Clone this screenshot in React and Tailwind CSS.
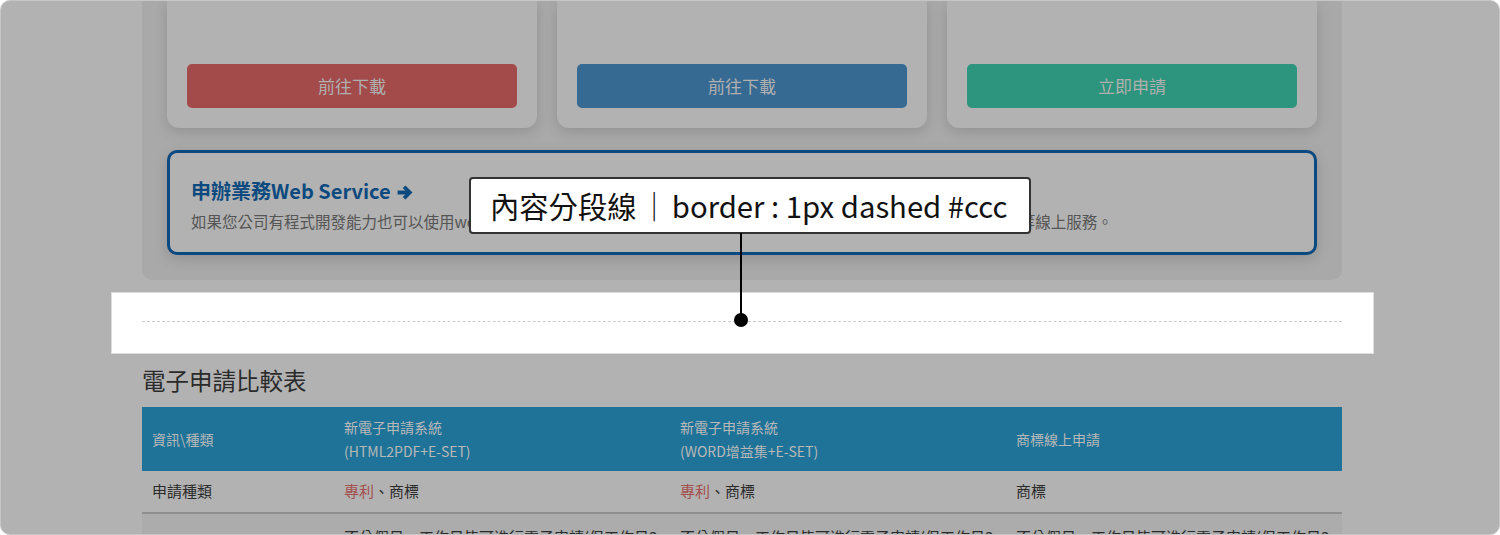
import React from "react";

const font = { fontFamily: '"Noto Sans CJK TC", "Noto Sans", sans-serif' };

function Card({ color, label }) {
  return (
    <div className="flex h-[127px] w-[370px] flex-col justify-end rounded-b-[12px] bg-[#b2b2b2] px-[20px] pb-[20px] shadow-[0_4px_14px_rgba(0,0,0,0.14)]">
      <div
        className={`flex h-[44px] items-center justify-center rounded-[5px] text-[17px] text-[#b0b0b0] ${color}`}
      >
        {label}
      </div>
    </div>
  );
}

function ArrowRight() {
  return (
    <svg viewBox="0 0 16 16" className="ml-[5px] mt-[2px] h-[17px] w-[17px]">
      <path d="M1.5 8H12.5" stroke="#0d4a7f" strokeWidth="3.6" fill="none" />
      <path
        d="M7.6 2.6L13 8L7.6 13.4"
        stroke="#0d4a7f"
        strokeWidth="3.6"
        fill="none"
        strokeLinejoin="miter"
        strokeLinecap="butt"
      />
    </svg>
  );
}

export default function App() {
  return (
    <div className="h-[535px] w-[1500px] bg-white" style={font}>
      <div className="relative h-[535px] w-[1500px] overflow-hidden rounded-[10px] border border-[#c6c6c6] bg-[#b2b2b2]">
        <div className="ml-[141px] w-[1200px]">
          {/* grey panel */}
          <div className="rounded-b-[10px] bg-[#a9a9a9] px-[25px] pb-[25px]">
            <div className="flex gap-[20px]">
              <Card color="bg-[#a34b4b]" label="前往下載" />
              <Card color="bg-[#366a92]" label="前往下載" />
              <Card color="bg-[#2d947d]" label="立即申請" />
            </div>
            <div className="mt-[22px] h-[105px] rounded-[10px] border-[3px] border-[#0b4a80] bg-[#b2b2b2] pl-[21px] pt-[24px] shadow-[0_4px_14px_rgba(0,0,0,0.14)]">
              <div className="flex items-center text-[20px] font-bold leading-[28px] text-[#0d4a7f]">
                申辦業務Web Service
                <ArrowRight />
              </div>
              <div className="mt-[4px] text-[15.5px] leading-[24px] text-[#555555]">
                如果您公司有程式開發能力也可以使用web service，將貴公司的系統與本局電子申請系統介接，即可直接提供專利、商標等線上服務。
              </div>
            </div>
          </div>

          {/* highlighted divider strip */}
          <div className="-ml-[31px] mt-[12px] h-[62px] w-[1263px] border border-[#dedede] bg-white pl-[30px] pt-[28px]">
            <div className="w-[1200px] border-t border-dashed border-[#cccccc]" />
          </div>

          {/* table section */}
          <div className="mt-[9px] text-[23.5px] leading-[34px] text-[#2b2b2b]">電子申請比較表</div>
          <table className="mt-[10px] w-[1200px] table-fixed border-collapse text-left">
            <colgroup>
              <col className="w-[192px]" />
              <col className="w-[336px]" />
              <col className="w-[336px]" />
              <col className="w-[336px]" />
            </colgroup>
            <thead>
              <tr className="h-[64px] bg-[#1f7398] text-[14px] font-normal leading-[24px] text-[#b8b8b8]">
                <th className="px-[10px] font-normal">資訊\種類</th>
                <th className="px-[10px] font-normal">
                  新電子申請系統
                  <br />
                  (HTML2PDF+E-SET)
                </th>
                <th className="px-[10px] font-normal">
                  新電子申請系統
                  <br />
                  (WORD增益集+E-SET)
                </th>
                <th className="px-[10px] font-normal">商標線上申請</th>
              </tr>
            </thead>
            <tbody className="text-[15px] text-[#2b2b2b]">
              <tr className="h-[42px] border-b-2 border-[#8f8f8f]">
                <td className="px-[10px]">申請種類</td>
                <td className="px-[10px]">
                  <span className="text-[#a3504f]">專利</span>、商標
                </td>
                <td className="px-[10px]">
                  <span className="text-[#a3504f]">專利</span>、商標
                </td>
                <td className="px-[10px]">商標</td>
              </tr>
              <tr className="bg-[#acacac] align-top">
                <td className="px-[10px] pt-[11px]"></td>
                <td className="px-[10px] pt-[11px] leading-[24px]">
                  不分假日、工作日皆可進行電子申請(但工作日3點半後送件以次日為收文日)
                </td>
                <td className="px-[10px] pt-[11px] leading-[24px]">
                  不分假日、工作日皆可進行電子申請(但工作日3點半後送件以次日為收文日)
                </td>
                <td className="px-[10px] pt-[11px] leading-[24px]">
                  不分假日、工作日皆可進行電子申請(但工作日3點半後送件以次日為收文日)
                </td>
              </tr>
            </tbody>
          </table>
        </div>

        {/* annotation callout */}
        <div className="absolute left-[468px] top-[176px] flex h-[57px] w-[562px] items-center whitespace-nowrap rounded-[4px] border-2 border-[#333333] bg-white pl-[19px] text-[29.3px] font-normal leading-none text-[#111111]">
          內容分段線<span className="mx-[3px]">｜</span>border : 1px dashed #ccc
        </div>
        <div className="absolute left-[739px] top-[232px] h-[86px] w-[2px] bg-black" />
        <div className="absolute left-[733px] top-[312px] h-[14px] w-[14px] rounded-full bg-black" />
      </div>
    </div>
  );
}
